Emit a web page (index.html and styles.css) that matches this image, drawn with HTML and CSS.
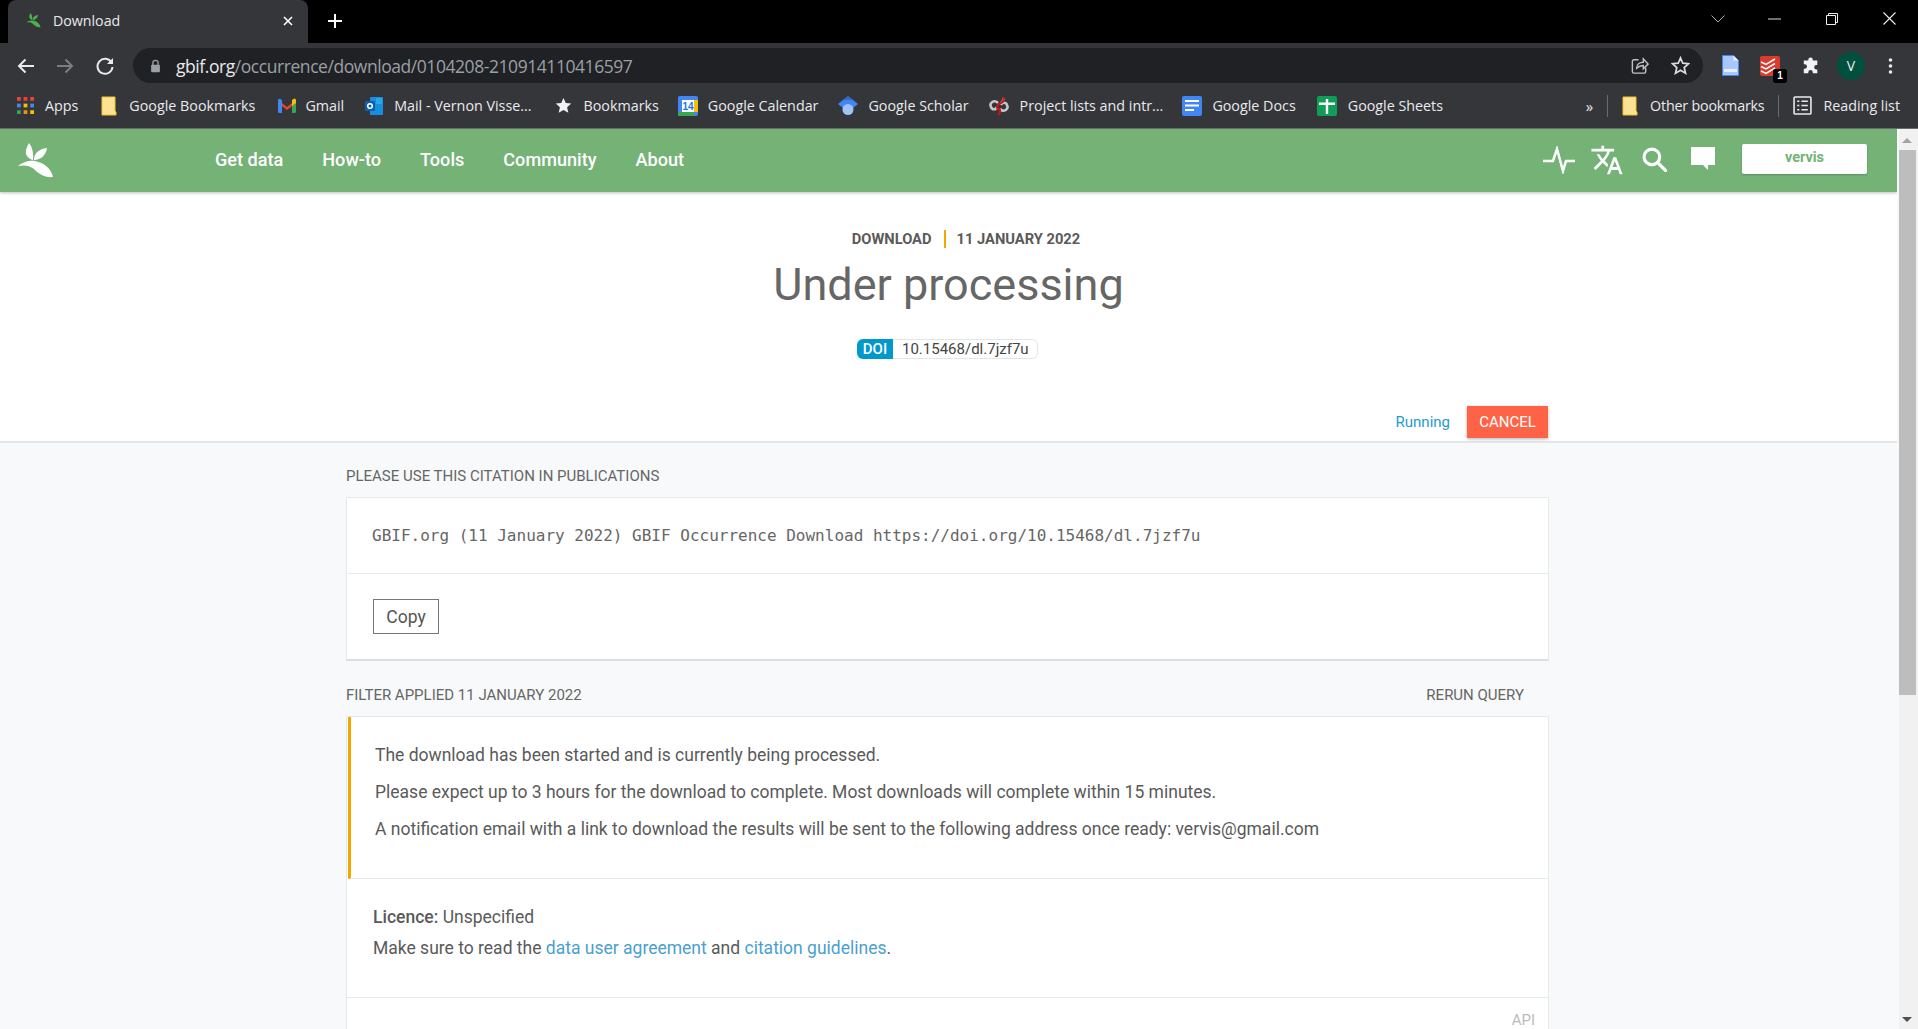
FILE: index.html
```html
<!DOCTYPE html>
<html>
<head>
  <title>Download</title>
  <link rel="stylesheet" href="styles.css">
</head>
<body>
  <div class="tabstrip">
    <div class="tab">
      <svg class="tab-icon" viewBox="0 0 36 36"><path d="M11 0C14 4 16 10 15 17 10 16 7 11 8 8 8 5 10 2 11 0z" fill="#4caf50"/><path d="M16 17C16 10 21 6 29 5 28 12 23 17 16 17z" fill="#4caf50"/><path d="M0 23C5 19 11 17 17 18 26 20 33 25 35 34 27 35 21 31 16 26 11 22 5 22 0 23z" fill="#4caf50"/></svg>
      <span class="tab-title">Download</span>
      <svg class="tab-close" viewBox="0 0 12 12"><path d="M2 2l8 8M10 2l-8 8" stroke="#fff" stroke-width="1.600"/></svg>
    </div>
    <svg class="tab-new" viewBox="0 0 16 16"><path d="M8 1v14M1 8h14" stroke="#fff" stroke-width="2"/></svg>
    <div class="win-btns">
      <svg class="win-chev" viewBox="0 0 14 8"><path d="M.5.5l6.500 6.500 6.500-6.500" fill="none" stroke="#aaa" stroke-width="1"/></svg>
      <svg class="win-min" viewBox="0 0 13 2"><path d="M0 1h13" stroke="#ddd" stroke-width="1"/></svg>
      <svg class="win-max" viewBox="0 0 12 12"><path d="M.5 2.500h9v9h-9zM2.500 2.500v-2h9v9h-2" fill="none" stroke="#eee"/></svg>
      <svg class="win-x" viewBox="0 0 13 13"><path d="M.5.5l12 12M12.500.5l-12 12" stroke="#eee" stroke-width="1.100"/></svg>
    </div>
  </div>

  <div class="toolbar">
    <svg class="tool-icon" viewBox="0 0 20 20"><path d="M18 10H3M9.500 3.500L3 10l6.500 6.500" fill="none" stroke="#e8eaed" stroke-width="2"/></svg>
    <svg class="tool-icon" viewBox="0 0 20 20"><path d="M2 10h15M10.500 3.500L17 10l-6.500 6.500" fill="none" stroke="#7b7d80" stroke-width="2"/></svg>
    <svg class="tool-icon tool-reload" viewBox="0 0 20 20"><path d="M16.500 6.500A7.500 7.500 0 1 0 17.500 11" fill="none" stroke="#e8eaed" stroke-width="2"/><path d="M18 2v6h-6z" fill="#e8eaed"/></svg>
    <div class="omnibox">
      <svg class="lock" viewBox="0 0 12 16"><path d="M3 7V4.500a3 3 0 0 1 6 0V7" fill="none" stroke="#9aa0a6" stroke-width="1.500"/><rect x="1" y="6.500" width="10" height="8.500" rx="1" fill="#9aa0a6"/></svg>
      <span class="url"><b>gbif.org</b>/occurrence/download/0104208-210914110416597</span>
      <svg class="share" viewBox="0 0 20 20"><path d="M9 4H4a1.500 1.500 0 0 0-1.500 1.500v11A1.500 1.500 0 0 0 4 18h11a1.500 1.500 0 0 0 1.500-1.500V12" fill="none" stroke="#bdc1c6" stroke-width="1.500"/><path d="M7 13c0-4 3-6.500 7-6.500V3l5 5.500-5 5V10c-3 0-5 1-7 3z" fill="#202124" stroke="#bdc1c6" stroke-width="1.500"/></svg>
      <svg class="star" viewBox="0 0 20 20"><path d="M10 2l2.400 5.600 6.100.5-4.600 4 1.400 6L10 15l-5.300 3.100 1.400-6-4.600-4 6.100-.5z" fill="none" stroke="#dadce0" stroke-width="1.800"/></svg>
    </div>
    <svg class="ext-doc" viewBox="0 0 17 21"><path d="M.5.500h11l5 5v15H.5z" fill="#a8c7fa" stroke="#4285f4"/><path d="M11.500.500v5h5z" fill="#e8f0fe"/><rect x="2" y="14" width="13" height="3" fill="#e8f0fe"/></svg>
    <div class="ext-todo">
      <svg viewBox="0 0 20 20"><rect width="20" height="20" rx="2" fill="#db3a2d"/><path d="M1 6l5 2.500L15 3M1 10.500l5 2.500 9-5.500M1 15l5 2.500 9-5.500" fill="none" stroke="#fff" stroke-width="1.500"/></svg>
      <span class="ext-badge">1</span>
    </div>
    <svg class="ext-puzzle" viewBox="0 0 20 20"><path d="M7 3a2.500 2.500 0 0 1 5 0v1h5v5h-1a2.500 2.500 0 0 0 0 5h1v4H12v-1a2.500 2.500 0 0 0-5 0v1H2v-5h1a2.500 2.500 0 0 0 0-5H2V4h5z" fill="#f1f3f4"/></svg>
    <span class="avatar">V</span>
    <svg class="menu-dots" viewBox="0 0 4 16"><circle cx="2" cy="2" r="1.800" fill="#e8eaed"/><circle cx="2" cy="8" r="1.800" fill="#e8eaed"/><circle cx="2" cy="14" r="1.800" fill="#e8eaed"/></svg>
  </div>

  <div class="bookmarks">
    <a class="bm bm-apps"><svg viewBox="0 0 18 18"><rect x="0" y="0" width="4" height="4" fill="#ea4335"/><rect x="7" y="0" width="4" height="4" fill="#ea4335"/><rect x="14" y="0" width="4" height="4" fill="#ea4335"/><rect x="0" y="7" width="4" height="4" fill="#4285f4"/><rect x="7" y="7" width="4" height="4" fill="#fbbc04"/><rect x="14" y="7" width="4" height="4" fill="#4285f4"/><rect x="0" y="14" width="4" height="4" fill="#34a853"/><rect x="7" y="14" width="4" height="4" fill="#f28b20"/><rect x="14" y="14" width="4" height="4" fill="#fbbc04"/></svg>Apps</a>
    <a class="bm bm-gbm"><svg class="folder" viewBox="0 0 16 20"><path d="M1 1h13v14l1 1v3H1z" fill="#fde293" stroke="#f2c12e"/></svg>Google Bookmarks</a>
    <a class="bm bm-gmail"><svg viewBox="0 0 20 20"><path d="M1 4l9 7 9-7v3l-9 7-9-7z" fill="#ea4335"/><path d="M1 4.500C1 3 2.500 2.500 3.500 3L5 4.200V17H2.200C1.500 17 1 16.500 1 15.800z" fill="#4285f4"/><path d="M19 4.500C19 3 17.500 2.500 16.500 3L15 4.200V17h2.800c.7 0 1.200-.5 1.200-1.200z" fill="#34a853"/><path d="M15 4.200L16.500 3c1-.5 2.500 0 2.500 1.500V7l-4 3z" fill="#fbbc04"/></svg>Gmail</a>
    <a class="bm bm-mail"><svg viewBox="0 0 20 20"><rect x="6" y="1" width="13" height="18" rx="1" fill="#1490df"/><rect x="12" y="2" width="6" height="6" fill="#28a8ea"/><rect x="1" y="5" width="10" height="10" rx="1" fill="#0f5fb0"/><circle cx="6" cy="10" r="2.300" fill="none" stroke="#fff" stroke-width="1.500"/></svg>Mail - Vernon Visse...</a>
    <a class="bm bm-star"><svg viewBox="0 0 18 18"><path d="M9 1l2.400 5.400 5.800.6-4.400 3.900 1.300 5.800L9 13.700l-5.100 3 1.300-5.800L.8 7l5.800-.6z" fill="#f1f3f4"/></svg>Bookmarks</a>
    <a class="bm bm-cal"><svg viewBox="0 0 20 20"><rect width="20" height="20" rx="2" fill="#4285f4"/><rect x="4" y="4" width="12" height="12" fill="#fff"/><rect y="16" width="16" height="4" fill="#34a853"/><rect x="16" y="4" width="4" height="12" fill="#fbbc04"/><text x="10" y="14" class="cal-num">14</text></svg>Google Calendar</a>
    <a class="bm bm-sch"><svg viewBox="0 0 20 20"><path d="M10 0l10 8-10 8L0 8z" fill="#4285f4"/><circle cx="10" cy="13.500" r="5.500" fill="#a1c2fa"/><path d="M10 0l5 4H5z" fill="#356ac3"/></svg>Google Scholar</a>
    <a class="bm bm-proj"><svg viewBox="0 0 20 20"><path d="M9 7C5 3 0 7 2 11c1 3 5 3 6 0M11 13c4 4 9 0 7-4-1-3-5-3-6 0M15 2c-2 3 0 5-4 5" fill="none" stroke="#c6c6c6" stroke-width="2.600"/><path d="M14 1c2 4-1 6-4 7-3 2-2 5 0 5 2 1 1 4-1 6" fill="none" stroke="#c9151b" stroke-width="2.200"/></svg>Project lists and intr...</a>
    <a class="bm bm-docs"><svg viewBox="0 0 20 20"><rect width="20" height="20" rx="2" fill="#4285f4"/><path d="M3 4h14v2H3zM3 8.500h14v2H3zM3 13h9v2H3z" fill="#fff"/></svg>Google Docs</a>
    <a class="bm bm-sheets"><svg viewBox="0 0 20 20"><rect width="20" height="20" rx="2" fill="#0f9d58"/><path d="M2 6.500h16V9H2zM8.800 3h2.400v15H8.800z" fill="#fff"/></svg>Google Sheets</a>
    <span class="bm-more">»</span>
    <span class="bm-sep"></span>
    <a class="bm bm-other"><svg class="folder" viewBox="0 0 16 20"><path d="M1 1h13v14l1 1v3H1z" fill="#fde293" stroke="#f2c12e"/></svg>Other bookmarks</a>
    <span class="bm-sep"></span>
    <a class="bm bm-read"><svg viewBox="0 0 18 18"><rect x="1" y="1" width="16" height="16" rx="1" fill="none" stroke="#e8eaed" stroke-width="1.500"/><path d="M4 5h2M8 5h6M4 9h2M8 9h6M4 13h2M8 13h6" stroke="#e8eaed" stroke-width="1.500"/></svg>Reading list</a>
  </div>

  <div class="viewport">
    <div class="page">
      <nav class="sitenav">
        <svg class="logo" viewBox="0 0 36 36"><path d="M11 0C14 4 16 10 15 17 10 16 7 11 8 8 8 5 10 2 11 0z" fill="#fff"/><path d="M16 17C16 10 21 6 29 5 28 12 23 17 16 17z" fill="#fff"/><path d="M0 23C5 19 11 17 17 18 26 20 33 25 35 34 27 35 21 31 16 26 11 22 5 22 0 23z" fill="#fff"/></svg>
        <div class="nav-links">
          <a>Get data</a>
          <a>How-to</a>
          <a>Tools</a>
          <a>Community</a>
          <a>About</a>
        </div>
        <div class="nav-right">
          <svg class="nav-pulse" viewBox="0 0 32 28"><path d="M0 15h10l4-12 6 22 3-10h9" fill="none" stroke="#fff" stroke-width="2.500"/></svg>
          <svg class="nav-lang" viewBox="0 0 24 24"><path fill="#fff" d="M12.870 15.070l-2.540-2.510.03-.03c1.740-1.940 2.980-4.170 3.710-6.530H17V4h-7V2H8v2H1v1.990h11.170C11.500 7.920 10.440 9.750 9 11.350 8.070 10.320 7.300 9.190 6.690 8h-2c.73 1.630 1.730 3.170 2.980 4.560l-5.090 5.020L4 19l5-5 3.110 3.110.76-2.040zM18.500 10h-2L12 22h2l1.120-3h4.750L21 22h2l-4.500-12zm-2.620 7l1.620-4.330L19.120 17h-3.240z"/></svg>
          <svg class="nav-search" viewBox="0 0 24 24"><circle cx="9.500" cy="9.500" r="7.500" fill="none" stroke="#fff" stroke-width="3"/><path d="M15 15l7.500 7.500" stroke="#fff" stroke-width="3.200" stroke-linecap="round"/></svg>
          <svg class="nav-chat" viewBox="0 0 24 24"><path fill="#fff" d="M0 0h24v18h-7v5l-5-5H0z"/></svg>
          <a class="user-btn">vervis</a>
        </div>
      </nav>

      <header class="dl-head">
        <div class="eyebrow"><span>DOWNLOAD</span><span class="eyebrow-date">11 JANUARY 2022</span></div>
        <h1>Under processing</h1>
        <div class="doi"><span class="doi-tag">DOI</span><span class="doi-num">10.15468/dl.7jzf7u</span></div>
        <div class="status-row">
          <span class="status">Running</span>
          <a class="cancel">CANCEL</a>
        </div>
      </header>

      <main class="content">
        <h4 class="sect-title">Please use this citation in publications</h4>
        <section class="card card-cite">
          <div class="card-row cite-text">GBIF.org (11 January 2022) GBIF Occurrence Download https://doi.org/10.15468/dl.7jzf7u</div>
          <div class="card-row copy-row"><button class="copy">Copy</button></div>
        </section>

        <div class="sect-head">
          <h4 class="sect-title">Filter applied 11 January 2022</h4>
          <a class="rerun">Rerun query</a>
        </div>
        <section class="card card-filter">
          <div class="notice">
            <p>The download has been started and is currently being processed.</p>
            <p>Please expect up to 3 hours for the download to complete. Most downloads will complete within 15 minutes.</p>
            <p>A notification email with a link to download the results will be sent to the following address once ready: vervis@gmail.com</p>
          </div>
          <div class="licence">
            <p><strong>Licence:</strong> Unspecified</p>
            <p>Make sure to read the <a>data user agreement</a> and <a>citation guidelines</a>.</p>
          </div>
          <div class="api-row">API</div>
        </section>
      </main>
    </div>
    <div class="scrollbar">
      <span class="arrow-up"></span>
      <span class="thumb"></span>
      <span class="arrow-down"></span>
    </div>
  </div>
</body>
</html>
```

FILE: styles.css
```css
* {
  box-sizing: border-box;
}
html, body {
  margin: 0;
  height: 100%;
  overflow: hidden;
}
body {
  font-family: Roboto, "Liberation Sans", sans-serif;
  background: #f7f9fa;
  display: flex;
  flex-direction: column;
}

/* browser window */
.tabstrip {
  height: 43px;
  background: #000;
  display: flex;
  align-items: center;
  padding-left: 8px;
  flex: none;
}
.tab {
  width: 300px;
  height: 43px;
  background: #35363a;
  border-radius: 8px 8px 0 0;
  display: flex;
  align-items: center;
  padding: 0 0 2px 18px;
}
.tab-icon {
  width: 15px;
  height: 15px;
}
.tab-title {
  margin-left: 12px;
  color: #e8eaed;
  font: 14.200px "Open Sans", sans-serif;
  flex: 1;
}
.tab-close {
  width: 12px;
  height: 12px;
  margin-right: 14px;
}
.tab-new {
  width: 16px;
  height: 16px;
  margin: -2px 0 0 19px;
}
.win-btns {
  margin-left: auto;
  padding-bottom: 6px;
  display: flex;
  align-items: center;
}
.win-btns svg {
  display: block;
}
.win-chev {
  width: 14px;
  height: 8px;
  margin-right: 43px;
}
.win-min {
  width: 13px;
  height: 2px;
  margin-right: 45px;
}
.win-max {
  width: 12px;
  height: 12px;
  margin-right: 45px;
}
.win-x {
  width: 13px;
  height: 13px;
  margin-right: 22px;
}

.toolbar {
  height: 42px;
  background: #35363a;
  display: flex;
  align-items: center;
  padding: 3px 0 0 16px;
  flex: none;
}
.tool-icon {
  width: 20px;
  height: 20px;
  margin-right: 19px;
}
.tool-reload {
  margin: 0 18px 0 1px;
}
.omnibox {
  width: 1570px;
  height: 35px;
  background: #202124;
  border-radius: 18px;
  display: flex;
  align-items: center;
  padding-left: 17px;
}
.lock {
  width: 11px;
  height: 14px;
}
.url {
  margin-left: 15px;
  font: 17.500px "Open Sans", sans-serif;
  color: #9aa0a6;
  letter-spacing: -.44px;
  flex: 1;
}
.url b {
  font-weight: 400;
  color: #e8eaed;
}
.share {
  width: 19px;
  height: 19px;
}
.star {
  width: 19px;
  height: 19px;
  margin: 0 13px 0 22px;
}
.ext-doc {
  width: 17px;
  height: 21px;
  margin-left: 19px;
}
.ext-todo {
  position: relative;
  width: 20px;
  height: 20px;
  margin-left: 21px;
}
.ext-todo svg {
  display: block;
  width: 20px;
  height: 20px;
}
.ext-badge {
  position: absolute;
  left: 13px;
  top: 13px;
  width: 14px;
  height: 14px;
  background: #000;
  border-radius: 2px;
  color: #fff;
  font: bold 10px/14px "Liberation Sans", sans-serif;
  text-align: center;
}
.ext-puzzle {
  width: 18px;
  height: 18px;
  margin-left: 22px;
}
.avatar {
  width: 28px;
  height: 28px;
  margin-left: 17px;
  border-radius: 50%;
  background: #00503f;
  color: #e8eaed;
  font: 14px/28px "Open Sans", sans-serif;
  text-align: center;
}
.menu-dots {
  width: 5px;
  height: 16px;
  margin-left: 23px;
}

.bookmarks {
  height: 44px;
  background: #35363a;
  border-bottom: 1px solid #6a6b6e;
  display: flex;
  align-items: center;
  padding: 0 0 2px 17px;
  flex: none;
}
.bm {
  display: flex;
  align-items: center;
  color: #e8eaed;
  font: 14.300px "Open Sans", sans-serif;
  white-space: nowrap;
}
.bm svg {
  width: 20px;
  height: 20px;
  margin-right: 10px;
  flex: none;
}
.bm .folder {
  width: 16px;
  margin-right: 12px;
}
.bm-apps svg {
  width: 17px;
  height: 17px;
  margin-right: 11px;
}
.bm-star svg {
  width: 17px;
  height: 17px;
  margin-right: 12px;
}
.bm-read svg {
  width: 19px;
  height: 19px;
  margin-right: 11px;
}
.bm-gmail svg { margin-right: 8px; }
.bm-proj svg { margin-right: 11px; }
.bm-sheets svg { margin-right: 11px; }
.bm-gbm { margin-left: 23px; }
.bm-gmail { margin-left: 22px; }
.bm-mail { margin-left: 20px; }
.bm-star { margin-left: 23px; }
.bm-cal { margin-left: 19px; }
.bm-sch { margin-left: 20px; }
.bm-proj { margin-left: 20px; }
.bm-docs { margin-left: 19px; }
.bm-sheets { margin-left: 21px; }
.bm-other { letter-spacing: -.2px; }
.cal-num {
  font: bold 10px "Liberation Sans", sans-serif;
  fill: #1a73e8;
  text-anchor: middle;
}
.bm-more {
  margin-left: auto;
  color: #e8eaed;
  font: 15px "Open Sans", sans-serif;
}
.bm-sep {
  width: 1px;
  height: 22px;
  margin: 0 14px;
  background: #6a6b6e;
}
.bm-read {
  margin-right: 18px;
}

/* page */
.viewport {
  flex: 1;
  display: flex;
  min-height: 0;
}
.page {
  flex: 1;
  min-width: 0;
  overflow: hidden;
}
.sitenav {
  height: 63px;
  background: #74b276;
  box-shadow: 0 1px 3px rgba(0,0,0,.25);
  display: flex;
  align-items: center;
  padding: 0 30px 0 18px;
  position: relative;
}
.logo {
  width: 36px;
  height: 36px;
}
.nav-links {
  display: flex;
  gap: 39px;
  margin: -2px 0 0 161px;
}
.nav-links a {
  color: #fff;
  font-size: 18.100px;
  font-weight: 500;
}
.nav-right {
  margin: -2px 0 0 auto;
  display: flex;
  align-items: center;
}
.nav-pulse {
  width: 32px;
  height: 28px;
}
.nav-lang {
  width: 34px;
  height: 34px;
  margin-left: 15px;
}
.nav-search {
  width: 25px;
  height: 25px;
  margin-left: 18px;
}
.nav-chat {
  width: 24px;
  height: 24px;
  margin: -2px 0 0 24px;
}
.user-btn {
  width: 125px;
  height: 30px;
  margin-left: 27px;
  margin-top: -2px;
  background: #fff;
  border-radius: 2px;
  box-shadow: 0 1px 2px rgba(0,0,0,.2);
  color: #74b276;
  font-size: 14.500px;
  font-weight: 700;
  line-height: 28px;
  text-align: center;
}

.dl-head {
  height: 251px;
  background: #fff;
  border-bottom: 2px solid #e4e7e9;
  display: flex;
  flex-direction: column;
  align-items: center;
  padding-top: 38px;
}
.eyebrow {
  display: flex;
  margin-left: 35px;
  font-size: 14.700px;
  font-weight: 700;
  line-height: 18px;
  color: #5a5a5a;
}
.eyebrow-date {
  margin-left: 12px;
  padding-left: 11px;
  border-left: 2px solid #f2a900;
}
.dl-head h1 {
  margin: 9px 0 0;
  font-size: 45px;
  font-weight: 400;
  line-height: 56px;
  color: #666;
}
.doi {
  display: flex;
  height: 20px;
  margin: 26px 0 0 -2px;
  font-size: 15px;
  line-height: 20px;
}
.doi-tag {
  width: 36px;
  background: #0099cc;
  border-radius: 6px 0 0 6px;
  color: #fff;
  font-weight: 500;
  text-align: center;
}
.doi-num {
  width: 145px;
  padding-left: 9px;
  border: 1px solid #e0e6ea;
  border-left: 0;
  border-radius: 0 6px 6px 0;
  line-height: 18px;
  color: #444;
}
.status-row {
  align-self: stretch;
  display: flex;
  justify-content: flex-end;
  align-items: center;
  margin-top: 47px;
  padding-right: 349px;
}
.status {
  color: #1e9bcf;
  font-size: 15px;
  margin-right: 17px;
}
.cancel {
  width: 81px;
  height: 32px;
  background: #ff6347;
  box-shadow: 0 1px 3px rgba(0,0,0,.3);
  color: #fff;
  font-size: 15px;
  line-height: 32px;
  text-align: center;
}

.content {
  width: 1203px;
  margin-left: 346px;
  padding-top: 24px;
}
.sect-title {
  margin: 0;
  font-size: 15px;
  font-weight: 400;
  line-height: 18px;
  color: #666;
  text-transform: uppercase;
}
.card {
  background: #fff;
  border: 1px solid #e4e9ec;
}
.card-cite {
  margin-top: 12px;
  height: 164px;
  border-bottom-width: 2px;
  border-bottom-color: #d6e0e6;
}
.card-row {
  padding-left: 26px;
}
.cite-text {
  height: 76px;
  border-bottom: 1px solid #e4e9ec;
  font: 16px/76px "DejaVu Sans Mono", monospace;
  color: #666;
  margin-left: 1px;
  padding-left: 24px;
}
.copy-row {
  padding-top: 25px;
}
.copy {
  width: 66px;
  height: 35px;
  padding: 0;
  background: #fff;
  border: 1px solid #777;
  border-radius: 0;
  font: 17.500px Roboto, sans-serif;
  color: #555;
}
.sect-head {
  display: flex;
  justify-content: space-between;
  margin-top: 25px;
  padding-right: 25px;
}
.rerun {
  font-size: 15px;
  line-height: 18px;
  color: #666;
  text-transform: uppercase;
}
.card-filter {
  margin-top: 12px;
  height: 400px;
  color: #5a5a5a;
  font-size: 17.500px;
  line-height: 25px;
}
.card-filter p {
  margin: 0;
}
.notice {
  height: 162px;
  margin-left: 1px;
  border-left: 3px solid #f7a600;
  border-bottom: 1px solid #e4e9ec;
  padding: 26px 0 0 24px;
}
.notice p + p {
  margin-top: 12px;
}
.licence {
  height: 119px;
  border-bottom: 1px solid #e4e9ec;
  padding: 26px 0 0 26px;
}
.licence p + p {
  margin-top: 6px;
}
.licence a {
  color: #4a9fd0;
}
.licence strong {
  font-weight: 500;
}
.api-row {
  padding: 12px 13px 0 0;
  text-align: right;
  font-size: 15px;
  line-height: 20px;
  color: #bbb;
}

.scrollbar {
  width: 21px;
  flex: none;
  background: #f1f1f1;
  position: relative;
  border-left: 2px solid #f7f9fa;
}
.thumb {
  position: absolute;
  left: 0;
  top: 21px;
  width: 17px;
  height: 545px;
  background: #bdbdbd;
}
.arrow-up, .arrow-down {
  position: absolute;
  left: 3px;
  width: 0;
  height: 0;
  border-left: 5px solid transparent;
  border-right: 5px solid transparent;
}
.arrow-up {
  top: 9px;
  border-bottom: 5px solid #a3a3a3;
}
.arrow-down {
  bottom: 7px;
  border-top: 5px solid #505050;
}
```
